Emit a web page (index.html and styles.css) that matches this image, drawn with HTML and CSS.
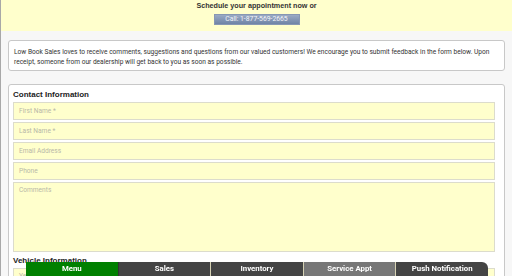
FILE: index.html
```html
<!DOCTYPE html>
<html>
<head>
<meta charset="utf-8">
<link rel="stylesheet" href="styles.css">
</head>
<body>
<div class="page">
  <header class="appt">
    <div class="appt-title">Schedule your appointment now or</div>
    <a class="call-btn">Call: 1-877-569-2665</a>
  </header>
  <main class="content">
    <section class="card intro">
      Low Book Sales loves to receive comments, suggestions and questions from our valued customers! We encourage you to submit feedback in the form below. Upon receipt, someone from our dealership will get back to you as soon as possible.
    </section>
    <section class="card form">
      <h2 class="section-title">Contact Information</h2>
      <div class="field">First Name *</div>
      <div class="field">Last Name *</div>
      <div class="field">Email Address</div>
      <div class="field">Phone</div>
      <div class="field area">Comments</div>
      <h2 class="section-title vehicle">Vehicle Information</h2>
      <div class="field short">Year</div>
    </section>
  </main>
</div>
<nav class="tabbar">
  <div class="tab menu">Menu</div>
  <div class="tab">Sales</div>
  <div class="tab">Inventory</div>
  <div class="tab active">Service Appt</div>
  <div class="tab last">Push Notification</div>
</nav>
</body>
</html>
```
FILE: styles.css
```css
html, body {
  margin: 0;
  padding: 0;
  height: 100%;
  overflow: hidden;
}
body {
  background: #f7f7f7;
  font-family: Roboto, "Liberation Sans", sans-serif;
  color: #333;
}
.page {
  border-left: 1px solid #a8a8a8;
  min-height: 100%;
  box-sizing: border-box;
}
.appt {
  background: #ffffcc;
  height: 31px;
  display: flex;
  flex-direction: column;
  align-items: center;
  padding-top: 2px;
  box-sizing: border-box;
}
.appt-title {
  font-family: "Liberation Sans", Arial, sans-serif;
  font-weight: bold;
  font-size: 7.2px;
  line-height: 8px;
  color: #333;
}
.call-btn {
  margin-top: 4px;
  width: 86px;
  height: 11px;
  background: linear-gradient(#9aaac4, #6f84a6);
  border: 1px solid #8797b3;
  box-sizing: border-box;
  color: #f4f4f8;
  font-family: Roboto, "Liberation Sans", sans-serif;
  font-size: 6.8px;
  line-height: 9px;
  text-align: center;
}
.content {
  padding: 9px 7px 0 7px;
}
.card {
  background: #fff;
  border: 1px solid #c8c8c8;
  border-radius: 3px;
}
.intro {
  padding: 6px 8px 5px 5px;
  font-size: 6.6px;
  line-height: 10px;
  color: #333;
  height: 31px;
  box-sizing: border-box;
}
.form {
  margin-top: 13px;
  padding: 3px 9px 0 4px;
  height: 220px;
}
.section-title {
  margin: 0;
  font-family: "Liberation Sans", Arial, sans-serif;
  font-size: 8px;
  line-height: 14px;
  font-weight: bold;
  color: #222;
}
.section-title.vehicle {
  margin-top: 1px;
}
.field {
  height: 18px;
  margin-bottom: 2px;
  background: #ffffcc;
  border: 1px solid #dcdccc;
  box-sizing: border-box;
  color: #b8b8a8;
  font-size: 6.6px;
  line-height: 16px;
  padding-left: 5px;
}
.field.short {
  line-height: 14px;
}
.field.area {
  height: 70px;
  line-height: 14px;
}
.tabbar {
  position: fixed;
  left: 26px;
  width: 462px;
  bottom: 0;
  height: 14px;
  display: flex;
}
.tab {
  flex: 1;
  background: #444;
  color: #fff;
  font-weight: bold;
  font-size: 7.8px;
  line-height: 14px;
  text-align: center;
  border-left: 1px solid #d6d2b4;
}
.tab.menu {
  background: #008000;
  border-left: none;
}
.tab.menu + .tab {
  border-left: 1px solid #333;
}
.tab.active {
  background: #777;
}
.tab.last {
  border-top-right-radius: 6px;
}
```
